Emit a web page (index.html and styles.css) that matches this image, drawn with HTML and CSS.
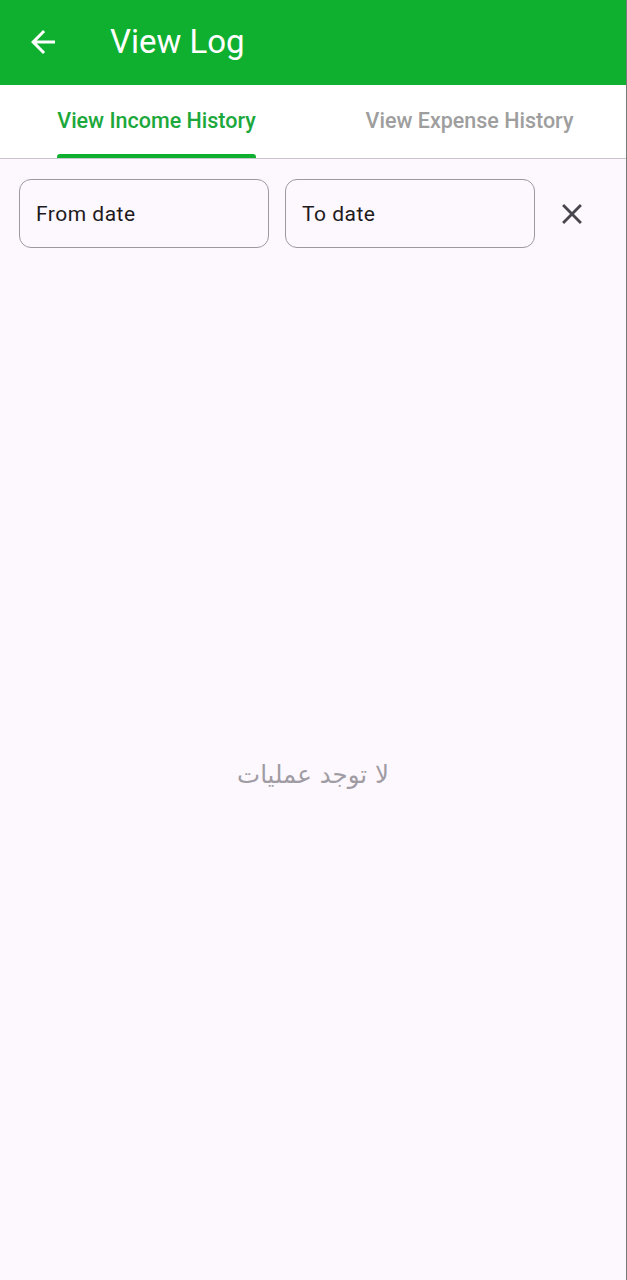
FILE: index.html
```html
<!DOCTYPE html>
<html lang="en">
<head>
<meta charset="utf-8">
<title>View Log</title>
<link rel="stylesheet" href="styles.css">
</head>
<body>
<div class="screen">
  <header class="appbar">
    <button class="back" aria-label="Back">
      <svg width="24" height="24" viewBox="0 0 24 24"><path d="M20 11H7.83l5.59-5.59L12 4l-8 8 8 8 1.41-1.41L7.83 13H20v-2z" fill="#fff"/></svg>
    </button>
    <h1 class="title">View Log</h1>
  </header>
  <nav class="tabs">
    <div class="tab active"><span class="tab-label">View Income History<span class="indicator"></span></span></div>
    <div class="tab"><span class="tab-label">View Expense History</span></div>
  </nav>
  <main class="content">
    <div class="filters">
      <div class="field">From date</div>
      <div class="field">To date</div>
      <button class="clear" aria-label="Clear">
        <svg width="24" height="24" viewBox="0 0 24 24"><path d="M19 6.41L17.59 5 12 10.59 6.41 5 5 6.41 10.59 12 5 17.59 6.41 19 12 13.41 17.59 19 19 17.59 13.41 12z" fill="#49454f"/></svg>
      </button>
    </div>
    <div class="empty" dir="rtl" lang="ar">لا توجد عمليات</div>
  </main>
</div>
</body>
</html>
```

FILE: styles.css
```css
* { box-sizing: border-box; }
html, body { margin: 0; padding: 0; }
body {
  font-family: Roboto, "Noto Sans", sans-serif;
  background: #fdf7fe;
}
.screen {
  width: 627px;
  height: 1280px;
  display: flex;
  flex-direction: column;
  border-right: 1px solid #7a7a7a;
  overflow: hidden;
}
.appbar {
  height: 85px;
  background: #0fb02f;
  display: flex;
  align-items: center;
  padding-left: 25px;
  padding-bottom: 2px;
  flex-shrink: 0;
}
.back {
  background: none;
  border: 0;
  padding: 0;
  width: 36px;
  height: 36px;
  display: flex;
  align-items: center;
  justify-content: center;
  cursor: pointer;
}
.back svg { width: 36px; height: 36px; }
.title {
  margin: 0 0 0 49px;
  color: #fff;
  font-weight: 400;
  font-size: 33px;
  letter-spacing: 0;
}
.tabs {
  height: 74px;
  background: #fff;
  display: flex;
  border-bottom: 1px solid #cac4d0;
  flex-shrink: 0;
}
.tab {
  flex: 1;
  display: flex;
  justify-content: center;
  align-items: stretch;
}
.tab-label {
  position: relative;
  display: flex;
  align-items: center;
  font-size: 21.5px;
  font-weight: 500;
  color: #9e9e9e;
  padding-bottom: 2px;
}
.tab.active .tab-label { color: #1da83c; }
.indicator {
  position: absolute;
  left: 0;
  right: 0;
  bottom: 0;
  height: 4px;
  background: #0fb02f;
  border-radius: 3px 3px 0 0;
}
.content {
  flex: 1;
  display: flex;
  flex-direction: column;
}
.filters {
  display: flex;
  align-items: center;
  padding: 20px 19px 0 19px;
  gap: 16px;
}
.field {
  width: 250px;
  height: 69px;
  border: 1.5px solid #9d99a1;
  border-radius: 12px;
  display: flex;
  align-items: center;
  padding-left: 16px;
  font-size: 21px;
  letter-spacing: 0.5px;
  color: #1d1b20;
}
.clear {
  background: none;
  border: 0;
  padding: 0;
  width: 40px;
  height: 40px;
  margin-left: 1px;
  display: flex;
  align-items: center;
  justify-content: center;
}
.clear svg { width: 34px; height: 34px; }
.empty {
  flex: 1;
  display: flex;
  align-items: center;
  justify-content: center;
  padding-top: 20px;
  font-family: "DejaVu Sans", "Noto Sans", sans-serif;
  font-size: 24.5px;
  color: #a09ca3;
}
```
